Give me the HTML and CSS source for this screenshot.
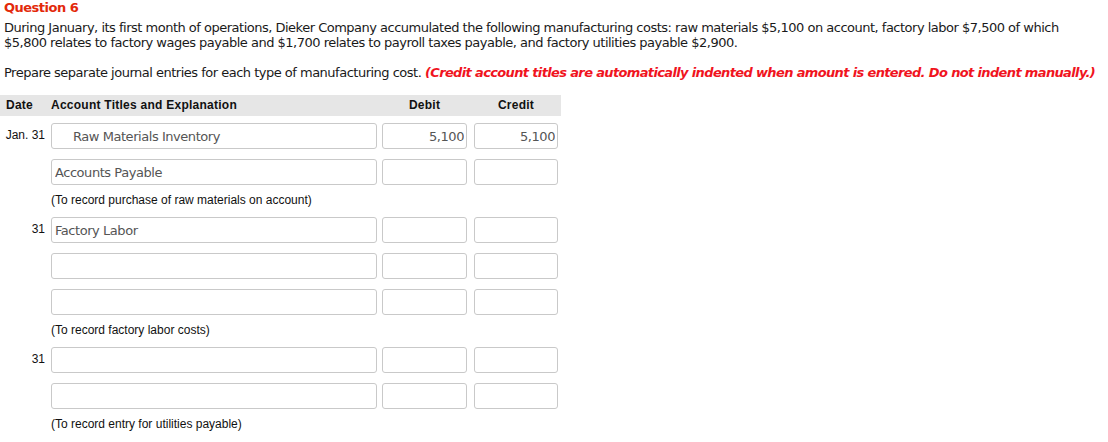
FILE: index.html
```html
<!DOCTYPE html>
<html lang="en">
<head>
<meta charset="utf-8">
<title>Question 6</title>
<link rel="stylesheet" href="styles.css">
</head>
<body>
<div class="page">
  <h1 class="qtitle">Question 6</h1>
  <p class="prompt">During January, its first month of operations, Dieker Company accumulated the following manufacturing costs: raw materials $5,100 on account, factory labor $7,500 of which $5,800 relates to factory wages payable and $1,700 relates to payroll taxes payable, and factory utilities payable $2,900.</p>
  <p class="instr">Prepare separate journal entries for each type of manufacturing cost. <em class="warn">(Credit account titles are automatically indented when amount is entered. Do not indent manually.)</em></p>

  <div class="journal">
    <div class="jhead">
      <span class="h-date">Date</span>
      <span class="h-acct">Account Titles and Explanation</span>
      <span class="h-debit">Debit</span>
      <span class="h-credit">Credit</span>
    </div>

    <div class="jrow">
      <span class="date">Jan. 31</span>
      <input class="field acct indent" type="text" value="Raw Materials Inventory">
      <input class="field amt debit" type="text" value="5,100">
      <input class="field amt credit" type="text" value="5,100">
    </div>
    <div class="jrow">
      <span class="date"></span>
      <input class="field acct" type="text" value="Accounts Payable">
      <input class="field amt debit" type="text" value="">
      <input class="field amt credit" type="text" value="">
    </div>
    <div class="expl">(To record purchase of raw materials on account)</div>

    <div class="jrow">
      <span class="date">31</span>
      <input class="field acct" type="text" value="Factory Labor">
      <input class="field amt debit" type="text" value="">
      <input class="field amt credit" type="text" value="">
    </div>
    <div class="jrow">
      <span class="date"></span>
      <input class="field acct" type="text" value="">
      <input class="field amt debit" type="text" value="">
      <input class="field amt credit" type="text" value="">
    </div>
    <div class="jrow">
      <span class="date"></span>
      <input class="field acct" type="text" value="">
      <input class="field amt debit" type="text" value="">
      <input class="field amt credit" type="text" value="">
    </div>
    <div class="expl">(To record factory labor costs)</div>

    <div class="jrow">
      <span class="date">31</span>
      <input class="field acct" type="text" value="">
      <input class="field amt debit" type="text" value="">
      <input class="field amt credit" type="text" value="">
    </div>
    <div class="jrow">
      <span class="date"></span>
      <input class="field acct" type="text" value="">
      <input class="field amt debit" type="text" value="">
      <input class="field amt credit" type="text" value="">
    </div>
    <div class="expl">(To record entry for utilities payable)</div>
  </div>
</div>
</body>
</html>
```

FILE: styles.css
```css
html, body {
  margin: 0;
  padding: 0;
  background: #ffffff;
}

.page {
  font-family: "DejaVu Sans", Verdana, sans-serif;
  font-size: 13px;
  line-height: 15px;
  letter-spacing: -0.5px;
  color: #1a1a1a;
  padding: 0 0 0 4px;
}

.qtitle {
  margin: 0;
  font-size: 13px;
  line-height: 15px;
  font-weight: bold;
  color: #e3290a;
}

.prompt {
  margin: 5px 0 0 0;
  max-width: 1085px;
}

.instr {
  margin: 15px 0 0 0;
  white-space: nowrap;
}

.warn {
  font-weight: bold;
  font-style: italic;
  color: #f0141e;
  letter-spacing: -0.64px;
}

.journal {
  margin: 15px 0 0 -4px;
  width: 561px;
  font-family: "Liberation Sans", Tahoma, sans-serif;
  font-size: 12px;
  letter-spacing: 0;
}

.jhead {
  display: grid;
  grid-template-columns: 51px 331px 92px 87px;
  align-items: center;
  height: 21px;
  background: #e6e6e6;
  font-weight: bold;
  letter-spacing: 0.25px;
  color: #111;
}

.h-date {
  padding-left: 6px;
}

.h-debit {
  text-align: center;
  padding-right: 7px;
}

.h-credit {
  text-align: center;
  padding-right: 3px;
}

.jhead + .jrow {
  margin-top: 7px;
}

.jrow {
  display: grid;
  grid-template-columns: 51px 331px 92px 87px;
  align-items: center;
  height: 26px;
  margin-bottom: 10px;
}

.date {
  text-align: right;
  padding-right: 6px;
  color: #111;
  position: relative;
  top: -1px;
}

.field {
  box-sizing: border-box;
  height: 26px;
  margin: 0;
  border: 1px solid #c9c9c9;
  border-radius: 3px;
  background: #fff;
  font-family: "DejaVu Sans", Verdana, sans-serif;
  font-size: 13px;
  letter-spacing: -0.45px;
  color: #555;
  padding: 0 3px;
  outline: none;
}

.acct {
  width: 326px;
}

.acct.indent {
  padding-left: 21px;
}

.amt {
  text-align: right;
  padding-right: 2px;
}

.debit {
  width: 85px;
}

.credit {
  width: 84px;
}

.expl {
  padding-left: 51px;
  height: 14px;
  line-height: 14px;
  margin-top: -2px;
  margin-bottom: 10px;
  color: #111;
}
```
